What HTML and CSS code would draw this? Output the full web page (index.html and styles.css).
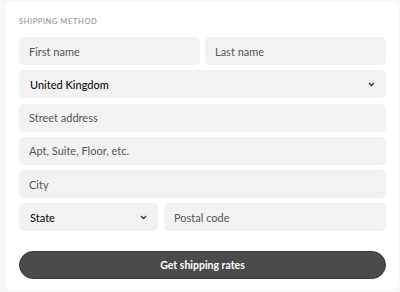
FILE: index.html
```html
<!DOCTYPE html>
<html lang="en">

<head>
    <meta charset="UTF-8">
    <meta name="viewport" content="width=device-width, initial-scale=1.0">
    <title>Shipping Method</title>
    <link rel="stylesheet" href="styles.css">
</head>

<body>
    <div class="card">
        <div class="section-title">Shipping method</div>
        <form class="shipping-form">
            <div class="row">
                <div class="field">First name</div>
                <div class="field">Last name</div>
            </div>
            <div class="field select">
                <span>United Kingdom</span>
                <svg class="chevron" width="7" height="5" viewBox="0 0 7 5"><path d="M1 1l2.5 2.5L6 1" fill="none" stroke="#333" stroke-width="1.3"/></svg>
            </div>
            <div class="field">Street address</div>
            <div class="field">Apt, Suite, Floor, etc.</div>
            <div class="field">City</div>
            <div class="row row-state">
                <div class="field select">
                    <span>State</span>
                    <svg class="chevron" width="7" height="5" viewBox="0 0 7 5"><path d="M1 1l2.5 2.5L6 1" fill="none" stroke="#333" stroke-width="1.3"/></svg>
                </div>
                <div class="field">Postal code</div>
            </div>
            <button class="rates-button" type="button">Get shipping rates</button>
        </form>
    </div>
</body>

</html>
```

FILE: styles.css
```css
body {
    margin: 0;
    background: #f7f7f7;
    font-family: 'Lato', 'Noto Sans', sans-serif;
}

.card {
    margin: 1px 1px 2px 5px;
    height: 289px;
    box-sizing: border-box;
    background: #fff;
    border-radius: 8px;
    padding: 16px 13px 0 14px;
}

.section-title {
    font-size: 7.5px;
    letter-spacing: 0.6px;
    text-transform: uppercase;
    color: #8a8a8a;
    line-height: 10px;
    margin-bottom: 10px;
}

.shipping-form {
    display: flex;
    flex-direction: column;
    gap: 5.3px;
}

.row {
    display: grid;
    grid-template-columns: 1fr 1fr;
    gap: 5px;
}

.row-state {
    grid-template-columns: 139px 1fr;
    gap: 6px;
}

.field {
    height: 28px;
    box-sizing: border-box;
    background: #f2f2f2;
    border-radius: 5px;
    padding: 0 10px;
    display: flex;
    align-items: center;
    font-size: 11px;
    color: #555;
}

.select {
    justify-content: space-between;
    color: #111;
    font-weight: 500;
    padding: 0 11px 0 11px;
}

.chevron {
    display: block;
}

.rates-button {
    margin-top: 14px;
    height: 28px;
    border: 1px solid #3a3a3a;
    border-radius: 14px;
    background: #4b4b4b;
    color: #fff;
    font-family: 'Lato', 'Noto Sans', sans-serif;
    font-weight: 700;
    font-size: 10.5px;
}
```
